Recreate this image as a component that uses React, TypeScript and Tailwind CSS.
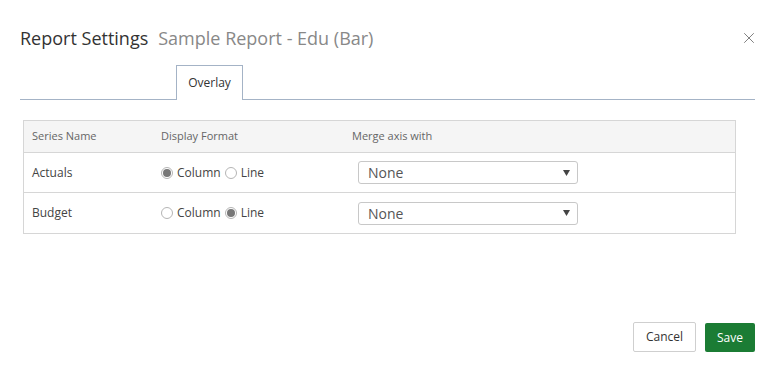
import { X } from 'lucide-react'

type Row = { name: string; format: 'column' | 'line' }

const ROWS: Row[] = [
  { name: 'Actuals', format: 'column' },
  { name: 'Budget', format: 'line' },
]

function Radio({ checked, label }: { checked: boolean; label: string }) {
  return (
    <label className="flex items-center gap-[4px]">
      <span className="w-[12px] h-[12px] rounded-full border border-[#b5b5b5] bg-white flex items-center justify-center">
        {checked && <span className="w-[8px] h-[8px] rounded-full bg-[#777]" />}
      </span>
      <span>{label}</span>
    </label>
  )
}

function Select() {
  return (
    <div className="ml-[6px] w-[220px] h-[23px] border border-[#c8c8c8] rounded-[3px] bg-white flex items-center justify-between pl-[9px] pr-[7px]">
      <span className="text-[14px] text-[#555]">None</span>
      <svg width="7" height="6" viewBox="0 0 7 6">
        <path d="M0 0 H7 L3.5 6 Z" fill="#444" />
      </svg>
    </div>
  )
}

export default function App() {
  return (
    <div
      className="w-[781px] h-[374px] bg-white flex flex-col text-[#333]"
      style={{ fontFamily: '"Open Sans", "Liberation Sans", sans-serif' }}
    >
      {/* Header */}
      <div className="flex items-center justify-between pl-5 pr-[23px] pt-[25px]">
        <div className="flex items-baseline gap-[10px] text-[18px] leading-[26px]">
          <span className="text-[#333]">Report Settings</span>
          <span className="text-[#888]">Sample Report - Edu (Bar)</span>
        </div>
        <X className="w-[18px] h-[18px] text-[#666]" strokeWidth={1.1} />
      </div>

      {/* Tabs */}
      <div className="ml-5 mr-[26px] mt-[14px] border-b border-[#a4b3c6] flex h-[35px]">
        <div className="ml-[156px] w-[67px] h-[35px] -mb-px bg-white border border-b-0 border-[#a4b3c6] flex items-center justify-center text-[12px] text-[#333]">
          Overlay
        </div>
      </div>

      {/* Table */}
      <div className="ml-[23px] mt-[20px] w-[713px] border border-[#d6d6d6]">
        <div className="flex h-[32px] items-center bg-[#f5f5f5] border-b border-[#d6d6d6] text-[11px] text-[#666]">
          <div className="w-[128px] pl-[8px]">Series Name</div>
          <div className="w-[191px] pl-[9px]">Display Format</div>
          <div className="pl-[9px]">Merge axis with</div>
        </div>
        {ROWS.map((r, i) => (
          <div
            key={r.name}
            className={`flex h-[40px] items-center text-[12px] text-[#444] ${i < ROWS.length - 1 ? 'border-b border-[#d6d6d6]' : ''}`}
          >
            <div className="w-[128px] pl-[8px]">{r.name}</div>
            <div className="w-[191px] pl-[9px] flex items-center gap-[4px]">
              <Radio checked={r.format === 'column'} label="Column" />
              <Radio checked={r.format === 'line'} label="Line" />
            </div>
            <div className="pl-[9px]">
              <Select />
            </div>
          </div>
        ))}
      </div>

      {/* Footer */}
      <div className="mt-auto flex justify-end gap-[9px] pr-[26px] pb-[22px] text-[12px]">
        <button className="w-[63px] h-[30px] border border-[#cfcfcf] rounded-[2px] bg-white text-[#333]">
          Cancel
        </button>
        <button className="w-[50px] h-[29px] mt-px rounded-[2px] bg-[#1b7c34] text-white">
          Save
        </button>
      </div>
    </div>
  )
}
